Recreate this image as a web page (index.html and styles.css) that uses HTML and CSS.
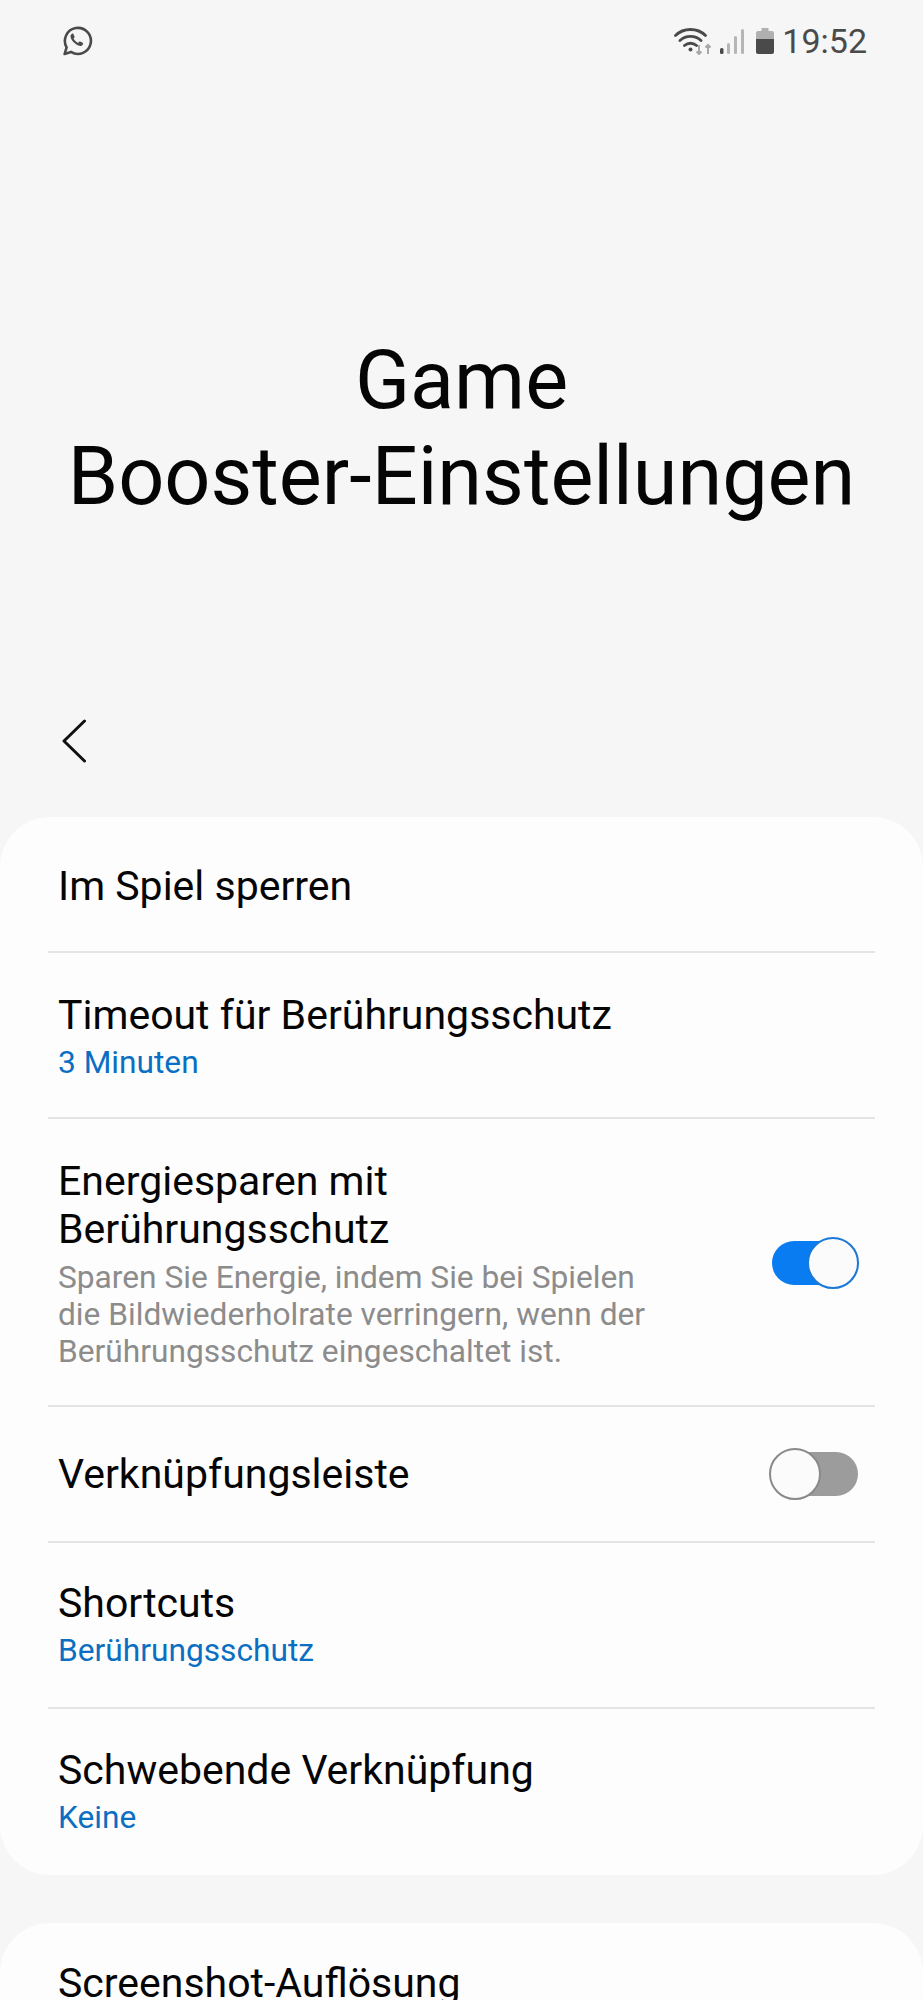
FILE: index.html
```html
<!DOCTYPE html>
<html>
  <head>
    <meta name="viewport" content="width=device-width,initial-scale=1.0">
    <title>Game Booster-Einstellungen</title>
    <link rel="stylesheet" href="styles.css">
  </head>
  <body>
    <div class="status-bar">
      <svg class="whatsapp" width="32" height="32" viewBox="0 0 32 32">
        <path d="M3.6 29 5.6 22.3A13 13 0 1 1 10 26.9Z" fill="none" stroke="#4a4a4a" stroke-width="2.6" stroke-linejoin="round"/>
        <path d="M11.4 8.6c-1.4.6-2.3 2.200-1.700 4 1.200 3.800 4.700 7 8.500 8.200 1.700.5 3.300-.4 3.900-1.900.2-.5 0-.9-.4-1.100l-2.600-1.300c-.4-.2-.8-.1-1.100.3l-.9 1.100c-2-.8-3.700-2.400-4.600-4.300l.8-.9c.3-.3.4-.7.2-1.100l-1.100-2.700c-.2-.4-.7-.5-1-.3Z" fill="#4a4a4a"/>
      </svg>
      <div class="status-right">
        <svg class="wifi" width="38" height="28" viewBox="0 0 38 28">
          <path d="M1.500 8.500C9.500 .5 23.500 .5 31.500 8.500M6 13.500C12 8 21 8 27 13.500M10.500 18.500C14 15.500 19 15.500 22.500 18.500" fill="none" stroke="#4a4a4a" stroke-width="2.800" stroke-linecap="round"/>
          <circle cx="16.500" cy="22.500" r="2" fill="#4a4a4a"/>
          <path d="M25 18v9M22.500 24.500 25 27l2.500-2.500M34 27v-9M31.500 20.500 34 18l2.500 2.500" fill="none" stroke="#a8a8a8" stroke-width="2"/>
        </svg>
        <svg class="signal" width="24" height="25" viewBox="0 0 24 25">
          <rect x="0" y="19" width="3.500" height="6" rx="1.500" fill="#4a4a4a"/>
          <rect x="7" y="14" width="3" height="11" rx="1.500" fill="#b5b5b5"/>
          <rect x="14" y="7" width="3" height="18" rx="1.500" fill="#b5b5b5"/>
          <rect x="21" y="0" width="3" height="25" rx="1.500" fill="#b5b5b5"/>
        </svg>
        <svg class="battery" width="18" height="26" viewBox="0 0 18 26">
          <path d="M5.500 0h7v3H16a2 2 0 0 1 2 2v7H0V5a2 2 0 0 1 2-2h3.500Z" fill="#b0b0b0"/>
          <path d="M0 11h18v13a2 2 0 0 1-2 2H2a2 2 0 0 1-2-2Z" fill="#4a4a4a"/>
        </svg>
        <span class="clock">19:52</span>
      </div>
    </div>

    <h1 class="page-title">Game<br>Booster-Einstellungen</h1>

    <div class="back-row">
      <svg width="24" height="44" viewBox="0 0 24 44">
        <path d="M22.500 2 2 22l20.500 20" fill="none" stroke="#111" stroke-width="3" stroke-linecap="round" stroke-linejoin="round"/>
      </svg>
    </div>

    <div class="card">
      <div class="row row-single row-low">
        <div class="row-text"><div class="row-title">Im Spiel sperren</div></div>
      </div>
      <div class="row row-value row-low">
        <div class="row-text">
          <div class="row-title">Timeout für Berührungsschutz</div>
          <div class="row-sub">3 Minuten</div>
        </div>
      </div>
      <div class="row row-long">
        <div class="row-text narrow">
          <div class="row-title">Energiesparen mit Berührungsschutz</div>
          <div class="row-desc">Sparen Sie Energie, indem Sie bei Spielen die Bildwiederholrate verringern, wenn der Berührungsschutz eingeschaltet ist.</div>
        </div>
        <div class="switch on"><div class="knob"></div></div>
      </div>
      <div class="row row-single">
        <div class="row-text"><div class="row-title">Verknüpfungsleiste</div></div>
        <div class="switch off"><div class="knob"></div></div>
      </div>
      <div class="row row-value">
        <div class="row-text">
          <div class="row-title">Shortcuts</div>
          <div class="row-sub">Berührungsschutz</div>
        </div>
      </div>
      <div class="row row-value">
        <div class="row-text">
          <div class="row-title">Schwebende Verknüpfung</div>
          <div class="row-sub">Keine</div>
        </div>
      </div>
    </div>

    <div class="card">
      <div class="row row-top">
        <div class="row-text"><div class="row-title">Screenshot-Auflösung</div></div>
      </div>
    </div>
  </body>
</html>
```

FILE: styles.css
```css
html, body { height: 2000px; overflow: hidden; }
body { margin: 0; background: #f6f6f6; color: #050505; font-family: Roboto, "Liberation Sans", sans-serif; }

.status-bar { height: 82px; display: flex; align-items: center; justify-content: space-between; padding: 0 56px 0 61px; }
.status-right { display: flex; align-items: center; }
.signal { margin-left: 8px; }
.battery { margin-left: 12px; }
.clock { font-size: 34px; color: #4a4a4a; margin-left: 8px; }

.page-title { margin: 0; padding-top: 251px; height: 362px; font-size: 81px; font-weight: 400; line-height: 96px; text-align: center; }
.back-row { height: 98px; padding: 24px 0 0 62px; display: flex; align-items: flex-start; }

.card { background: #fdfdfd; border-radius: 50px; margin-bottom: 48px; }
.row { display: flex; align-items: center; justify-content: space-between; margin: 0 48px; padding: 0 17px 0 10px; border-bottom: 2px solid #e4e4e4; box-sizing: border-box; }
.row:last-child { border-bottom: none; }
.row-single { height: 136px; }
.row-value { height: 166px; }
.row-long { height: 288px; padding-top: 2px; }
.row-low { padding-top: 3px; }
.row-top { height: 120px; }
.row-text.narrow { width: 600px; }
.row-title { font-size: 41px; line-height: 48px; color: #050505; }
.row-sub { font-size: 31.7px; line-height: 40px; margin-top: 4px; color: #0a6fc2; }
.row-desc { font-size: 31.7px; line-height: 37px; margin-top: 6px; color: #8c8c8c; }

.switch { width: 86px; height: 44px; border-radius: 22px; position: relative; flex-shrink: 0; }
.switch.on { background: #0a7cf2; }
.switch.off { background: #9c9c9c; }
.knob { position: absolute; top: -4px; width: 52px; height: 52px; box-sizing: border-box; border-radius: 50%; background: #fbfbfb; border: 2px solid #1a78d6; }
.on .knob { right: -1px; }
.off .knob { left: -3px; border-color: #8a8a8a; }
```
